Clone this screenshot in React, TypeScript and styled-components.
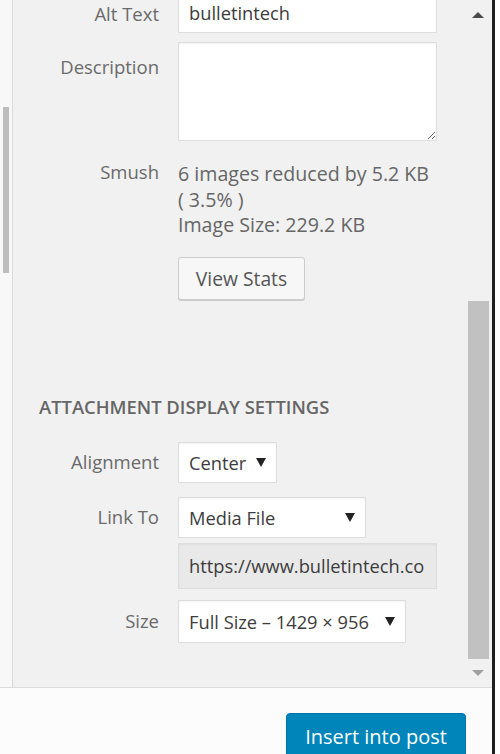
import React from 'react';
import styled, { createGlobalStyle } from 'styled-components';

const GlobalStyle = createGlobalStyle`
  html, body {
    margin: 0;
    padding: 0;
    background: #ffffff;
  }
  body {
    font-family: 'Open Sans', 'Noto Sans', 'Liberation Sans', sans-serif;
    overflow: hidden;
  }
`;

const Page = styled.div`
  display: flex;
  width: 500px;
  height: 754px;
  overflow: hidden;
`;

const Frame = styled.div`
  width: 492px;
  display: flex;
  flex-direction: column;
`;

const Divider = styled.div`
  width: 3px;
  background: #1e1e1e;
`;

const Scroller = styled.div`
  height: 687px;
  flex-shrink: 0;
  display: flex;
  border-bottom: 1px solid #dcdcdc;
  background: #f1f1f1;
  overflow: hidden;
`;

const SideStrip = styled.div`
  width: 13px;
  background: #f8f8f8;
  border-right: 1px solid #dadada;
  padding: 107px 0 0 3px;
  box-sizing: border-box;
`;

const StripThumb = styled.div`
  width: 6px;
  height: 166px;
  background: #bdbdbd;
`;

const Panel = styled.div`
  flex: 1;
  padding: 0 0 0 26px;
  margin-top: -8px;
  color: #666;
`;

const Row = styled.div<{ $mt?: number }>`
  display: grid;
  grid-template-columns: 120px 1fr;
  column-gap: 19px;
  margin-top: ${(p) => p.$mt ?? 0}px;
`;

const Label = styled.div<{ $pt: number }>`
  text-align: right;
  font-size: 18.5px;
  line-height: 22px;
  padding-top: ${(p) => p.$pt}px;
  color: #6a6a6a;
  white-space: nowrap;
`;

const Field = styled.div<{ $w: number; $h: number; $muted?: boolean }>`
  box-sizing: border-box;
  width: ${(p) => p.$w}px;
  height: ${(p) => p.$h}px;
  border: 1px solid #dddddd;
  background: ${(p) => (p.$muted ? '#e9e9e9' : '#ffffff')};
  box-shadow: inset 0 1px 2px rgba(0, 0, 0, 0.05);
  display: flex;
  align-items: center;
  justify-content: space-between;
  padding: 0 10px 0 10px;
  font-size: 18.3px;
  color: #3c3c3c;
  white-space: nowrap;
  overflow: hidden;
`;

const TextArea = styled.textarea`
  box-sizing: border-box;
  width: 259px;
  height: 99px;
  border: 1px solid #dddddd;
  background: #ffffff;
  box-shadow: inset 0 1px 2px rgba(0, 0, 0, 0.05);
  margin: 0;
  display: block;
  outline: none;
`;

const Arrow = styled.span`
  width: 0;
  height: 0;
  border-left: 5px solid transparent;
  border-right: 5px solid transparent;
  border-top: 9px solid #222;
  margin-left: 10px;
  flex-shrink: 0;
`;

const SmushText = styled.div`
  font-size: 19.6px;
  line-height: 25.5px;
  color: #666;
  white-space: nowrap;
`;

const Button = styled.div`
  box-sizing: border-box;
  width: 127px;
  height: 43px;
  margin-top: 19px;
  border: 1px solid #cccccc;
  border-radius: 3px;
  background: #f7f7f7;
  box-shadow: 0 1px 0 #cccccc;
  display: flex;
  align-items: center;
  justify-content: center;
  font-size: 19.3px;
  color: #555;
`;

const Heading = styled.h2`
  margin: 96px 0 24px;
  font-size: 18.4px;
  font-weight: 600;
  line-height: 22px;
  color: #666;
  text-transform: uppercase;
  white-space: nowrap;
`;

const ScrollBar = styled.div`
  width: 25px;
  display: flex;
  flex-direction: column;
  align-items: center;
  padding-top: 12px;
  box-sizing: border-box;
`;

const ScrollArrow = styled.span<{ $down?: boolean; $color: string }>`
  width: 0;
  height: 0;
  margin-left: -3px;
  border-left: 6px solid transparent;
  border-right: 6px solid transparent;
  ${(p) =>
    p.$down
      ? `border-top: 6px solid ${p.$color};`
      : `border-bottom: 6px solid ${p.$color};`}
`;

const ScrollThumb = styled.div`
  width: 21px;
  height: 358px;
  margin: 283px 0 11px -2px;
  background: #c1c1c1;
`;

const Toolbar = styled.div`
  flex: 1;
  min-height: 0;
  overflow: hidden;
  background: #fcfcfc;
  display: flex;
  justify-content: flex-end;
  align-items: flex-start;
  padding: 25px 26px 0 0;
`;

const PrimaryButton = styled.div`
  box-sizing: border-box;
  width: 180px;
  height: 48px;
  background: #0085ba;
  border: 1px solid #0073aa;
  border-radius: 4px;
  box-shadow: 0 1px 0 #006799;
  color: #ffffff;
  font-size: 20px;
  display: flex;
  align-items: flex-start;
  justify-content: center;
  padding-top: 9px;
`;

const Filler = styled.div`
  flex: 1;
  background: #ffffff;
`;

export default function App() {
  return (
    <>
      <GlobalStyle />
      <Page>
        <Frame>
          <Scroller>
            <SideStrip>
              <StripThumb />
            </SideStrip>
            <Panel>
              <Row>
                <Label $pt={11}>Alt Text</Label>
                <Field $w={259} $h={41}>bulletintech</Field>
              </Row>
              <Row $mt={9}>
                <Label $pt={14}>Description</Label>
                <TextArea readOnly />
              </Row>
              <Row $mt={20}>
                <Label $pt={0}>Smush</Label>
                <div>
                  <SmushText>
                    6 images reduced by 5.2 KB
                    <br />( 3.5% )
                    <br />
                    Image Size: 229.2 KB
                  </SmushText>
                  <Button>View Stats</Button>
                </div>
              </Row>
              <Heading>Attachment Display Settings</Heading>
              <Row>
                <Label $pt={9}>Alignment</Label>
                <Field $w={99} $h={41}>
                  Center
                  <Arrow />
                </Field>
              </Row>
              <Row $mt={14}>
                <Label $pt={9}>Link To</Label>
                <Field $w={188} $h={41}>
                  Media File
                  <Arrow />
                </Field>
              </Row>
              <Row $mt={5}>
                <span />
                <Field $w={259} $h={46} $muted>
                  https://www.bulletintech.co
                </Field>
              </Row>
              <Row $mt={11}>
                <Label $pt={10}>Size</Label>
                <Field $w={228} $h={43}>
                  Full Size – 1429 × 956
                  <Arrow />
                </Field>
              </Row>
            </Panel>
            <ScrollBar>
              <ScrollArrow $color="#4a4a4a" />
              <ScrollThumb />
              <ScrollArrow $down $color="#a0a0a0" />
            </ScrollBar>
          </Scroller>
          <Toolbar>
            <PrimaryButton>Insert into post</PrimaryButton>
          </Toolbar>
        </Frame>
        <Divider />
        <Filler />
      </Page>
    </>
  );
}
